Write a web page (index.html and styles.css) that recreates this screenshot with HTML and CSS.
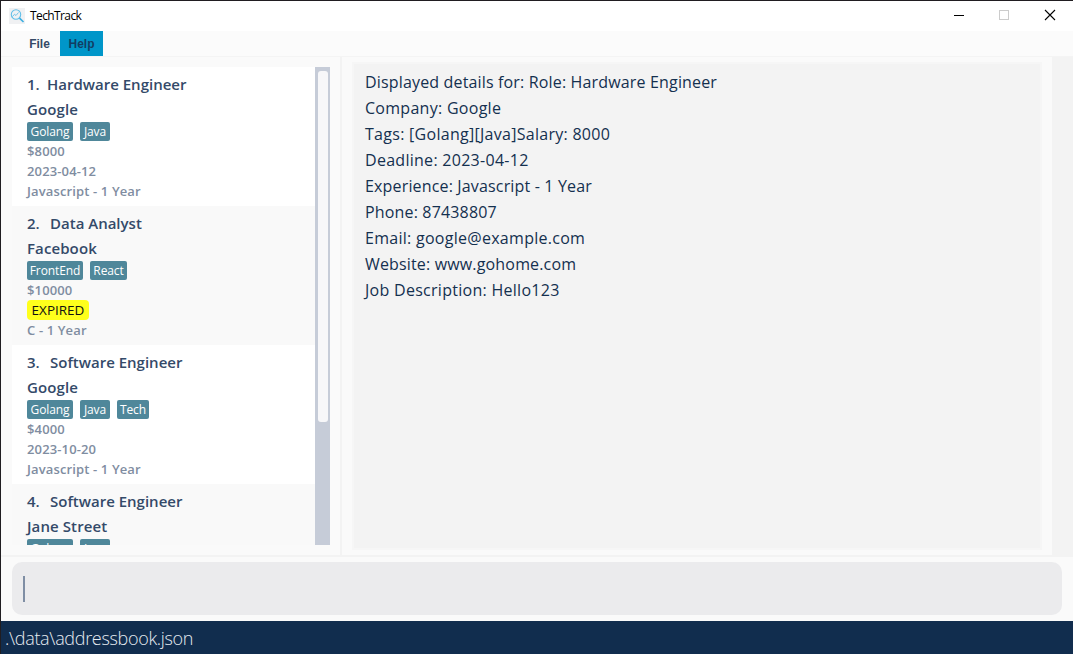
FILE: index.html
```html
<!DOCTYPE html>
<html lang="en">
<head>
<meta charset="utf-8">
<title>TechTrack</title>
<link rel="stylesheet" href="styles.css">
</head>
<body>
<div class="window">
  <header class="titlebar">
    <svg class="logo" width="16" height="16" viewBox="0 0 16 16" fill="none">
      <rect width="16" height="16" fill="#f0f1f3"/>
      <circle cx="7" cy="6.500" r="4.700" stroke="#62bfe8" stroke-width="1.1"/>
      <path d="M3.500 8.500l2-2.200 1.500 1.200L9.500 4.500" stroke="#62bfe8" stroke-width=".9"/>
      <path d="M10.500 10.200l4 3.800" stroke="#3aaee0" stroke-width="1.6"/>
    </svg>
    <span class="title">TechTrack</span>
    <svg class="controls" width="104" height="12" viewBox="0 0 104 12" fill="none" shape-rendering="crispEdges">
      <path d="M1 6.500h10" stroke="#000"/>
      <rect x="46.500" y="1.500" width="9" height="9" stroke="#ccc"/>
      <path d="M92 1l10 10M102 1L92 11" stroke="#000" stroke-width="1.1" shape-rendering="auto"/>
    </svg>
  </header>
  <nav class="menubar"><span class="menu">File</span><span class="menu active">Help</span></nav>
  <main class="panes">
    <section class="list-pane">
      <div class="list">
        <article class="card">
          <h2 class="role"><span class="num">1.</span><span>Hardware Engineer</span></h2>
          <p class="company">Google</p>
          <div class="tags"><span class="tag w46">Golang</span><span class="tag w30">Java</span></div>
          <p class="info">$8000</p><p class="info">2023-04-12</p><p class="info">Javascript - 1 Year</p>
        </article>
        <article class="card">
          <h2 class="role"><span class="num wide">2.</span><span>Data Analyst</span></h2>
          <p class="company">Facebook</p>
          <div class="tags"><span class="tag w56">FrontEnd</span><span class="tag w37">React</span></div>
          <p class="info">$10000</p><p class="info"><span class="expired">EXPIRED</span></p><p class="info">C - 1 Year</p>
        </article>
        <article class="card">
          <h2 class="role"><span class="num wide">3.</span><span>Software Engineer</span></h2>
          <p class="company">Google</p>
          <div class="tags"><span class="tag w46">Golang</span><span class="tag w30">Java</span><span class="tag w32">Tech</span></div>
          <p class="info">$4000</p><p class="info">2023-10-20</p><p class="info">Javascript - 1 Year</p>
        </article>
        <article class="card">
          <h2 class="role"><span class="num wide">4.</span><span>Software Engineer</span></h2>
          <p class="company">Jane Street</p>
          <div class="tags"><span class="tag w46">Golang</span><span class="tag w30">Java</span></div>
        </article>
      </div>
      <div class="scrollbar"><div class="thumb"></div></div>
    </section>
    <section class="detail-pane">
      <div class="details">
        <p>Displayed details for: Role: Hardware Engineer</p>
        <p class="loose">Company: Google</p>
        <p class="loose">Tags: [Golang][Java]Salary: 8000</p>
        <p class="loose">Deadline: 2023-04-12</p>
        <p>Experience: Javascript - 1 Year</p>
        <p>Phone: 87438807</p>
        <p class="loose">Email: google@example.com</p>
        <p>Website: www.gohome.com</p>
        <p class="loose">Job Description: Hello123</p>
      </div>
    </section>
  </main>
  <div class="command"><div class="field"><span class="caret"></span></div></div>
  <footer class="status">.\data\addressbook.json</footer>
</div>
</body>
</html>
```
FILE: styles.css
```css
* { box-sizing: border-box; }
body, p, h2 { margin: 0; }
body { overflow: hidden; font-family: "Open Sans", "Noto Sans", sans-serif; }
.window { display: flex; flex-direction: column; width: 1073px; height: 654px; background: #fafafa; border-top: 1px solid #201d21; border-left: 1px solid #201d21; }
.titlebar { display: flex; align-items: center; height: 30px; flex: none; background: #fff; padding: 0 16px 1px 8px; }
.title { margin-left: 5px; font-size: 12px; color: #000; letter-spacing: -0.6px; white-space: nowrap; }
.controls { margin: -1px 0 0 auto; }
.menubar { display: flex; height: 26px; flex: none; padding-left: 18px; border-bottom: 1px solid #f4f4f4; font: bold 12px/26px "Liberation Sans", Arial, sans-serif; color: #354a66; background: #fbfbfb; }
.menu { width: 41px; height: 25px; text-align: center; }
.menu.active { width: 43px; background: #0096c9; color: #123e64; }
.panes { display: flex; height: 500px; flex: none; background: #f3f3f3; padding: 0 21px 2px 0; }
.list-pane { display: flex; width: 339px; padding: 10px 10px 10px 11px; background: #fafafa; }
.list { width: 303px; height: 478px; overflow: hidden; }
.card { height: 139px; padding: 5px 15px 0; background: #fff; }
.card:nth-child(even) { background: #f9f9f9; }
.role, .company { height: 25px; font-size: 15px; line-height: 25px; font-weight: 600; color: #344a69; letter-spacing: 0; white-space: nowrap; }
.company { letter-spacing: 0.1px; }
.role { display: flex; }
.num { width: 20px; flex: none; }
.num.wide { width: 23px; }
.tags { display: flex; gap: 7px; height: 19px; }
.tag { height: 19px; border-radius: 2px; background: #4f879a; color: #fff; font-size: 12px; line-height: 19px; text-align: center; white-space: nowrap; letter-spacing: -0.1px; }
.w46 { width: 46px; }
.w30 { width: 30px; }
.w56 { width: 56px; }
.w37 { width: 37px; }
.w32 { width: 32px; }
.info { height: 20px; font-size: 13px; line-height: 20px; font-weight: 600; color: #7f8da1; letter-spacing: 0.13px; white-space: nowrap; }
.expired { display: block; width: 62px; height: 20px; border-radius: 4px; background: #ffff1c; color: #111; font-size: 13.5px; font-weight: 400; letter-spacing: 0; text-align: center; }
.scrollbar { width: 15px; height: 478px; padding: 4px 2px 0 3px; background: #c6ccd8; }
.thumb { height: 351px; border-radius: 3px; background: #f7f7f9; }
.detail-pane { flex: 1; margin-left: 2px; padding: 5px 10px 5px; background: #fafafa; }
.details { height: 488px; padding: 5px 11px; border: 2px solid #f6f6f6; background: #f3f3f3; font-size: 16px; line-height: 26px; color: #14304f; letter-spacing: 0.16px; white-space: nowrap; }
.loose { letter-spacing: 0.28px; }
.command { flex: none; height: 64px; padding: 5px 11px 6px; background: #fafafa; }
.field { height: 53px; border-radius: 10px; background: #ebebed; padding: 14px 11px; }
.caret { display: block; width: 2px; height: 26px; background: #7f8ea4; }
.status { flex: 1; background: #112d4e; color: #e6ebf1; font-size: 18px; font-weight: 300; line-height: 34px; padding-left: 4px; letter-spacing: -0.32px; }
```
